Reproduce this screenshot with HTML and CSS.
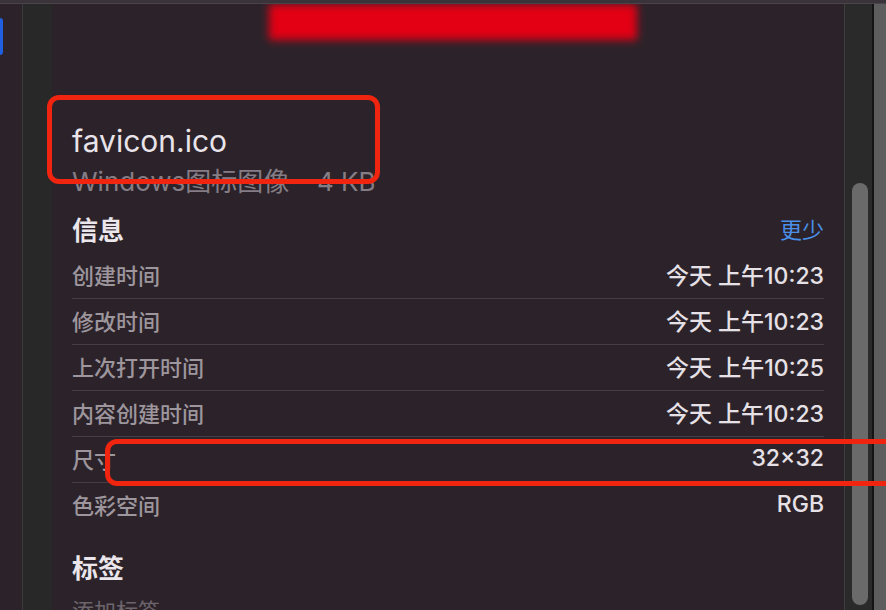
FILE: index.html
```html
<!DOCTYPE html>
<html lang="zh-CN">
<head>
<meta charset="utf-8">
<title>favicon.ico</title>
<link rel="stylesheet" href="styles.css">
</head>
<body>
<div class="topband"></div>
<div class="window">
  <div class="strip"><div class="tab"></div></div>
  <div class="sidebar"></div>
  <div class="panel">
    <div class="preview"><div class="redact"></div></div>
    <div class="title">favicon.ico</div>
    <div class="subtitle">Windows图标图像 – 4 KB</div>
    <div class="section-head"><span class="h">信息</span><span class="link">更少</span></div>
    <div class="rows">
      <div class="row"><span class="k">创建时间</span><span class="v">今天 上午10:23</span></div>
      <div class="row"><span class="k">修改时间</span><span class="v">今天 上午10:23</span></div>
      <div class="row"><span class="k">上次打开时间</span><span class="v">今天 上午10:25</span></div>
      <div class="row"><span class="k">内容创建时间</span><span class="v">今天 上午10:23</span></div>
      <div class="row"><span class="k">尺寸</span><span class="v">32×32</span></div>
      <div class="row"><span class="k">色彩空间</span><span class="v">RGB</span></div>
    </div>
    <div class="section-head tags"><span class="h">标签</span></div>
    <div class="add">添加标签</div>
  </div>
  <div class="scroll"><div class="thumb"></div></div>
  <div class="edge"></div>
</div>
<div class="mark mark-title"></div>
<div class="mark mark-size"></div>
</body>
</html>
```

FILE: styles.css
```css
* { box-sizing: border-box; }

body {
  margin: 0;
  width: 886px;
  height: 610px;
  overflow: hidden;
  position: relative;
  background: #2c232a;
  font-family: Inter, "Noto Sans CJK SC", sans-serif;
}

.topband {
  height: 4px;
  background: #3a3339;
  border-bottom: 1px solid #4a444a;
}

.window {
  display: flex;
  height: 606px;
}

.strip {
  width: 23px;
  border-right: 1px solid #3b3b3b;
  background: #2c232a;
}

.tab {
  margin-top: 14px;
  width: 3px;
  height: 37px;
  background: #1f5fe0;
  border-radius: 0 3px 3px 0;
}

.sidebar {
  width: 29px;
  background: #282828;
}

.panel {
  width: 793px;
  padding: 0 20px;
  border-right: 1px solid #3e3e3e;
  background: #2c232a;
}

.preview {
  height: 119px;
  overflow: hidden;
  position: relative;
}

.redact {
  margin-left: 197px;
  width: 368px;
  height: 36px;
  background: #e30014;
  filter: blur(4px);
}

.title {
  font-size: 30px;
  line-height: 36px;
  color: #e9e4e9;
}

.subtitle {
  margin-top: 8px;
  font-size: 26px;
  line-height: 30px;
  color: #857d85;
}

.section-head {
  margin-top: 13px;
  margin-bottom: 7px;
  height: 36px;
  display: flex;
  align-items: center;
  justify-content: space-between;
}

.section-head .h {
  font-size: 26px;
  font-weight: 700;
  color: #ebe6eb;
}

.section-head .link {
  font-size: 22px;
  color: #4a8fe8;
}

.rows {
  display: flex;
  flex-direction: column;
}

.row {
  height: 46px;
  padding-bottom: 4px;
  display: flex;
  align-items: center;
  justify-content: space-between;
  border-bottom: 1px solid #463e45;
  font-size: 22px;
}

.row:last-child {
  border-bottom: none;
  height: 45px;
}

.k {
  color: #9d969d;
  font-weight: 500;
}

.v {
  color: #e6e1e6;
  font-weight: 500;
  font-size: 23px;
}

.tags {
  margin-top: 20px;
  margin-bottom: 0;
}

.add {
  margin-top: 12px;
  font-size: 22px;
  line-height: 30px;
  color: #6d656c;
}

.scroll {
  width: 29px;
  border-right: 2px solid #141414;
  background: #2a2a2a;
  padding-top: 179px;
}

.thumb {
  margin-left: 7px;
  width: 16px;
  height: 422px;
  border-radius: 8px;
  background: #6a6a6a;
}

.edge {
  flex: 1;
  background: #5d5d5d;
}

.mark {
  position: absolute;
  border: 5px solid #f0240f;
  border-radius: 12px;
}

.mark-title {
  left: 47px;
  top: 95px;
  width: 333px;
  height: 89px;
}

.mark-size {
  left: 105px;
  top: 439px;
  width: 820px;
  height: 47px;
}
```
